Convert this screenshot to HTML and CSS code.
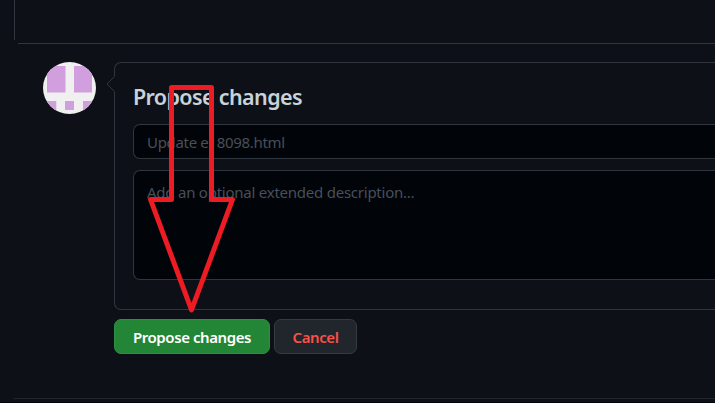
FILE: index.html
```html
<!DOCTYPE html>
<html lang="en">
<head>
<meta charset="utf-8">
<title>Propose changes</title>
<link rel="stylesheet" href="styles.css">
</head>
<body>
<div class="page">
  <svg class="editor-end" width="715" height="62" viewBox="0 0 715 62" aria-hidden="true">
    <path d="M14.5 0V40M18 43.5H715"/>
  </svg>
  <main class="commit">
    <svg class="avatar" width="53" height="52" viewBox="0 0 53 52" aria-hidden="true">
      <defs><clipPath id="round"><ellipse cx="26.5" cy="26" rx="26.5" ry="26"/></clipPath></defs>
      <g clip-path="url(#round)">
        <path fill="#f0f0f0" d="M0 0h53v52H0z"/>
        <path fill="#d19fde" d="M4 4h18.5v26.5H4zM31 4h18v26.5H31zM4 39h9.300v9H4zM22 39h9v9h-9zM40 39h9v9h-9z"/>
      </g>
    </svg>
    <div class="column">
      <form class="card">
        <svg class="caret" width="9" height="16" viewBox="0 0 9 16" aria-hidden="true"><path class="caret-fill" d="M9 0L1 8l8 8z"/><path class="caret-line" d="M8.500 .5L1 8l7.500 7.500"/></svg>
        <h3 class="title"><span>Propose changes</span></h3>
        <div class="field summary"><span>Update e18098.html</span></div>
        <div class="field description"><span>Add an optional extended description...</span></div>
      </form>
      <div class="actions">
        <button class="btn primary"><span>Propose changes</span></button>
        <button class="btn danger"><span>Cancel</span></button>
      </div>
    </div>
  </main>
  <div class="footer-rule"></div>
  <svg class="arrow" width="90" height="232" viewBox="0 0 90 232" aria-hidden="true"><path d="M26.500 5.500H66.500V117.500H87.500L46.500 228 5.500 117.500H26.500z"/></svg>
</div>
</body>
</html>
```
FILE: styles.css
```css
* { box-sizing: border-box; }
body { margin: 0; background: #0d1117; color: #c9d1d9; font-family: "Noto Sans", "Open Sans", sans-serif; }
.page { position: relative; width: 715px; height: 403px; overflow: hidden; border-bottom: 1px solid #010409; }
.editor-end { display: block; }
.editor-end path { fill: none; stroke: #30363d; }
.commit { display: flex; gap: 18px; padding-left: 43px; height: 336px; }
.avatar { flex: none; }
.column { flex: 1; }
.card { position: relative; height: 248px; padding: 17px 0 0 18px; border: 1px solid #30363d; border-right: 0; border-radius: 7px 0 0 7px; }
.caret { position: absolute; left: -9px; top: 13px; }
.caret-fill { fill: #0d1117; }
.caret-line { fill: none; stroke: #30363d; }
.title { margin: 0 0 11px; height: 33px; line-height: 33px; font-size: 21.5px; font-weight: 600; letter-spacing: -.63px; white-space: nowrap; }
.field { background: #010409; border: 1px solid #30363d; border-right: 0; border-radius: 7px 0 0 7px; padding-left: 13px; color: #484f58; font-size: 15px; white-space: nowrap; }
.summary { height: 35px; line-height: 35px; margin-bottom: 11px; letter-spacing: -.32px; }
.description { height: 110px; padding-top: 10px; line-height: 23px; letter-spacing: -.24px; }
.actions { display: flex; gap: 4px; margin-top: 9px; }
.btn { height: 35px; padding: 2px 0 0; border: 1px solid; border-radius: 7px; font: 600 15px/31px "Noto Sans", sans-serif; letter-spacing: -.42px; white-space: nowrap; }
.primary { width: 156px; color: #fff; background: #238636; border-color: #2f8f41; }
.danger { width: 83px; color: #f85149; background: #21262d; border-color: #363b42; }
.footer-rule { margin-left: 14px; height: 1px; background: #21262d; }
.arrow { position: absolute; left: 145px; top: 82px; }
.arrow path { fill: none; stroke: #ed1c24; stroke-width: 5; stroke-linejoin: round; }
```
